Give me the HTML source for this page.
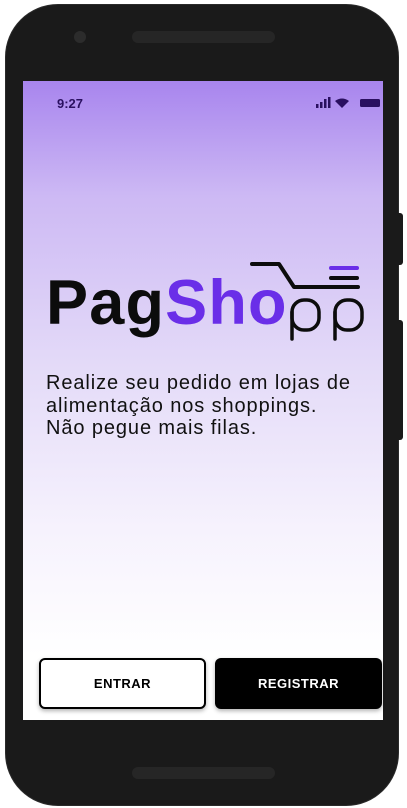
<!DOCTYPE html><html><head><style>
body{margin:0;width:407px;height:808px;background:#fff;position:relative;overflow:hidden;font-family:"Liberation Sans",sans-serif}
.phone{position:absolute;left:6px;top:5px;width:392px;height:800px;border-radius:52px;background:#1a1a1a;box-shadow:0 0 0 1px #2a2a2a}
.btnside{position:absolute;left:396px;width:7px;background:#1a1a1a;border-radius:0 3px 3px 0}
.screen{position:absolute;left:23px;top:81px;width:360px;height:639px;background:linear-gradient(#a885ee 0%,#cdb9f4 18%,#e4dbf8 45%,#f6f2fd 70%,#fff 90%)}
.spk{position:absolute;left:132px;width:143px;height:12px;border-radius:6px;background:#262626}
.btn{position:absolute;top:658px;height:51px;border-radius:6px;display:flex;align-items:center;justify-content:center;font-weight:bold;font-size:13px;letter-spacing:.5px;box-sizing:border-box}
</style></head><body>
<div class="phone"></div>
<div class="btnside" style="top:213px;height:52px"></div>
<div class="btnside" style="top:320px;height:120px"></div>
<div class="spk" style="top:31px"></div>
<div class="spk" style="top:767px"></div>
<div style="position:absolute;left:74px;top:31px;width:12px;height:12px;border-radius:50%;background:#2c2c2c"></div>
<div class="screen"></div>
<div style="position:absolute;left:57px;top:96px;font-size:13px;font-weight:bold;color:#2a1060">9:27</div>
<svg style="position:absolute;left:314px;top:97px" width="70" height="12">
<rect x="2" y="7" width="2.5" height="4" fill="#2a1060"/><rect x="6" y="5" width="2.5" height="6" fill="#2a1060"/><rect x="10" y="2" width="2.5" height="9" fill="#2a1060"/><rect x="14" y="0" width="2.5" height="11" fill="#2a1060"/>
<path d="M21 4 Q28 -1 35 4 L28 11 Z" fill="#2a1060"/>
<rect x="46" y="2" width="20" height="8" rx="1.5" fill="#2a1060"/>
</svg>
<div style="position:absolute;left:46px;top:272px;font-size:63px;font-weight:bold;letter-spacing:1.2px;color:#0c0c0c;line-height:1">Pag<span style="color:#6a2ee8">Sho</span></div>
<svg style="position:absolute;left:0;top:0" width="407" height="400" fill="none" stroke-linecap="round" stroke-linejoin="round">
<path d="M252 264 H279 L294 287 H358" stroke="#0c0c0c" stroke-width="4"/>
<path d="M331 268 H357" stroke="#6a2ee8" stroke-width="4"/>
<path d="M331 278 H357" stroke="#0c0c0c" stroke-width="4"/>
<rect x="292" y="300" width="27" height="30" rx="12" stroke="#0c0c0c" stroke-width="3.5"/>
<path d="M292 312 V339" stroke="#0c0c0c" stroke-width="3.5"/>
<rect x="335" y="300" width="27" height="30" rx="12" stroke="#0c0c0c" stroke-width="3.5"/>
<path d="M335 312 V339" stroke="#0c0c0c" stroke-width="3.5"/>
</svg>
<div style="position:absolute;left:46px;top:372px;font-size:20px;letter-spacing:0.9px;line-height:22.5px;color:#111">Realize seu pedido em lojas de<br>alimentação nos shoppings.<br>Não pegue mais filas.</div>
<div class="btn" style="left:39px;width:167px;border:2px solid #000;background:#fff;color:#000;box-shadow:0 2px 4px rgba(0,0,0,.3)">ENTRAR</div>
<div class="btn" style="left:215px;width:167px;background:#000;color:#fff;box-shadow:0 2px 4px rgba(0,0,0,.3)">REGISTRAR</div>
</body></html>
